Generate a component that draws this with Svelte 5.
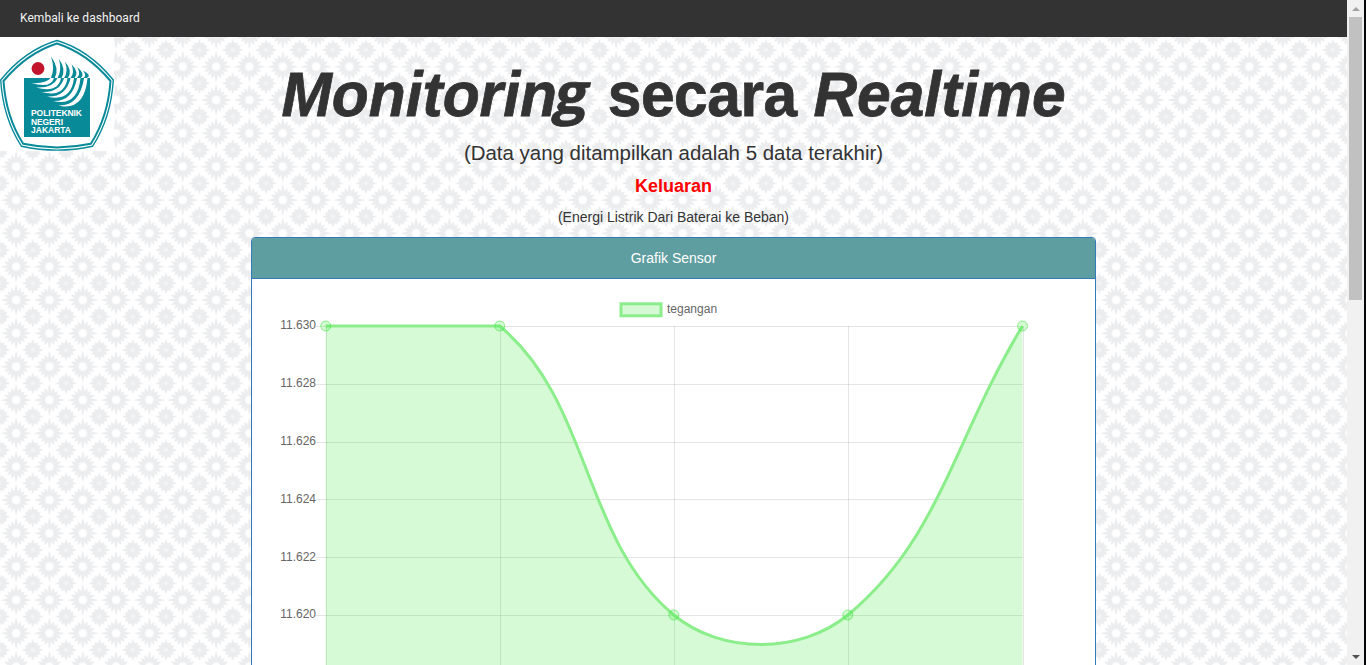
<script>
  const xs = [325.7, 499.7, 673.8, 847.8, 1022.5];
  const top = 326;
  const step = 57.8;
  const ticks = ['11.630', '11.628', '11.626', '11.624', '11.622', '11.620'];
  const values = [11.63, 11.63, 11.62, 11.62, 11.63];
  const ox = 252;
  const oy = 279;
  const pts = values.map((v, i) => ({ x: xs[i] - ox, y: top - oy + ((11.63 - v) / 0.002) * step }));
  const grid = xs.map((x) => Math.round(x) + 0.5 - ox);

  function spline(points) {
    const minY = top - oy;
    const ctrl = points.map((p, i) => {
      const a = points[Math.max(0, i - 1)];
      const b = points[Math.min(points.length - 1, i + 1)];
      const d1 = Math.hypot(p.x - a.x, p.y - a.y);
      const d2 = Math.hypot(b.x - p.x, b.y - p.y);
      const f1 = (0.4 * d1) / (d1 + d2);
      const f2 = (0.4 * d2) / (d1 + d2);
      return {
        px: p.x - f1 * (b.x - a.x), py: Math.max(minY, p.y - f1 * (b.y - a.y)),
        nx: p.x + f2 * (b.x - a.x), ny: Math.max(minY, p.y + f2 * (b.y - a.y))
      };
    });
    let d = `M${points[0].x} ${points[0].y}`;
    for (let i = 1; i < points.length; i++) {
      const c = ctrl[i - 1];
      const n = ctrl[i];
      d += `C${c.nx} ${c.ny} ${n.px} ${n.py} ${points[i].x} ${points[i].y}`;
    }
    return d;
  }
  const line = spline(pts);
  const area = `${line}V400H${pts[0].x}Z`;

  const petals = Array.from({ length: 16 }, (_, i) => {
    const len = i % 4 === 0 ? 15.6 : i % 4 === 2 ? 12 : 12.8;
    return { r: i * 22.5, d: `M0-3.500C-2-6-2.200-9 0-${len}C2.200-9 2-6 0-3.500Z` };
  });
  const rays = Array.from({ length: 12 }, (_, i) => {
    const len = i % 3 === 0 ? 11 : 9.2;
    return { r: i * 30, d: `M0 0L-1.800-6.300 0-${len} 1.800-6.300Z` };
  });

  const blades = [
    [51, 56.5, 54.8], [59, 59, 61.5], [65, 61.700, 68], [71.5, 64.3, 74.5], [77.3, 67.3, 80.700], [83, 70.5, 87]
  ].map(([x, y, b]) => `M${x} ${y}Q${b + 5} ${(y + 78) / 2 + 1} ${b} 78H${b - 4}Q${b + 0.5} ${(y + 78) / 2 + 2} ${x} ${y}Z`);
  const crescents = [
    [54, 31, 83], [61, 36, 87.5], [67.5, 41.5, 92], [74, 47, 96.5], [80.5, 53, 101], [87.5, 58, 105.5]
  ].map(([b, x, y]) => `M${b} 78Q${b - 3} ${y + 6} ${x} ${y}Q${b - 8} ${y + 1} ${b - 3.4} 78Z`);
</script>

<div class="screen">
  <svg class="wallpaper" width="1347" height="628" aria-hidden="true">
    <defs>
      <g id="large">
        {#each petals as p}<path transform="rotate({p.r})" d={p.d} />{/each}
      </g>
      <g id="small">
        {#each rays as p}<path transform="rotate({p.r})" d={p.d} />{/each}
        <circle r="1" fill="#f7f7f8" />
      </g>
      <pattern id="flowers" width="33.333" height="33.333" patternUnits="userSpaceOnUse" x="-.6" y="-3.7">
        <g fill="#ebecee">
          <use href="#large" x="16.7" y="0" /><use href="#large" x="16.7" y="33.333" />
          <use href="#small" x="0" y="16.67" /><use href="#small" x="33.333" y="16.67" />
        </g>
      </pattern>
    </defs>
    <rect width="1347" height="628" fill="url(#flowers)" />
  </svg>

  <div class="page">
    <nav><a href="#dashboard">Kembali ke dashboard</a></nav>
    <svg class="logo" width="114" height="114" viewBox="0 37 114 114">
      <path d="M0 37H114V151H0Z" fill="#fff" />
      <path d="M57 40.5Q89 50 113.3 80Q111 118 92.5 146.3Q57 154 21.5 146.3Q3 118 .7 80Q25 50 57 40.5Z" fill="#fff" stroke="#098a99" stroke-width="1.4" />
      <path d="M57 43.5Q87 53 110.5 81Q108 117 90.8 143.8Q57 151 23.2 143.8Q6 117 3.5 81Q27 53 57 43.5Z" fill="none" stroke="#098a99" stroke-width="2" />
      <path d="M24 78H90V137H24Z" fill="#098a99" />
      <circle cx="38" cy="68.5" r="6.4" fill="#c3142d" />
      {#each blades as d}<path {d} fill="#098a99" />{/each}
      {#each crescents as d}<path {d} fill="#fff" />{/each}
      <g class="logo-text" fill="#fff">
        <text x="31" y="116.300" textLength="51">POLITEKNIK</text>
        <text x="31" y="124.800" textLength="32">NEGERI</text>
        <text x="31" y="133.300" textLength="40">JAKARTA</text>
      </g>
    </svg>
    <header>
      <h1><i>Monitorin<span class="g">g</span></i> <span class="mid">secara</span> <i>Realtime</i></h1>
      <p class="lead">(Data yang ditampilkan adalah 5 data terakhir)</p>
      <h2>Keluaran</h2>
      <p class="note">(Energi Listrik Dari Baterai ke Beban)</p>
    </header>
    <section class="panel">
      <div class="heading">Grafik Sensor</div>
      <svg class="chart" width="843" height="386">
        <rect x="369" y="24.8" width="40" height="12" fill="#d5f9d5" stroke="#8bee8b" stroke-width="3" />
        <text x="415" y="34">tegangan</text>
        <g stroke="#000" stroke-opacity=".1">
          {#each grid as x}<path d="M{x} 47V386" />{/each}
          {#each ticks as _, i}<path d="M64 {Math.round(47 + i * step) + 0.5}H771" />{/each}
        </g>
        {#each ticks as label, i}
          <text x="64" y={50.3 + i * step} text-anchor="end">{label}</text>
        {/each}
        <path d={area} fill="#2ee52e" fill-opacity=".2" />
        <path d={line} fill="none" stroke="#8bee8b" stroke-width="3" />
        {#each pts as p}
          <circle cx={p.x} cy={p.y} r="5" fill="#2ee52e" fill-opacity=".2" stroke="#2ee52e" stroke-opacity=".5" />
        {/each}
      </svg>
    </section>
  </div>

  <div class="scrollbar">
    <span class="up"></span>
    <span class="thumb"></span>
    <span class="down"></span>
  </div>
  <div class="edge"></div>
</div>

<style>
  :global(body) { overflow: hidden; background: #fff; }
  .screen {
    position: relative; display: flex; width: 1366px; height: 665px; overflow: hidden;
    font-family: "Liberation Sans", Arial, sans-serif; color: #333;
  }
  .wallpaper { position: absolute; left: 0; top: 37px; }
  .page { position: relative; width: 1347px; height: 665px; overflow: hidden; }
  nav { height: 37px; background: #333; display: flex; align-items: center; padding: 0 20px 1px; box-sizing: border-box; }
  nav a { color: #f2f2f2; text-decoration: none; font: 12px Roboto, sans-serif; letter-spacing: .06px; }
  .logo { position: absolute; left: 0; top: 37px; }
  .logo-text { font: bold 8.5px "Liberation Sans", Arial, sans-serif; }
  header { height: 200px; text-align: center; white-space: nowrap; }
  h1, h2, p { margin: 0; }
  h1 { font-size: 63px; line-height: 72px; padding-top: 21px; font-weight: 700; transform: scaleX(.96); -webkit-text-stroke: .8px #333; }
  .mid { letter-spacing: -.5px; }
  .g { display: inline-block; font-family: "Open Sans", sans-serif; font-style: normal; font-size: 61px; line-height: 60px; margin-left: 1px; transform-origin: 50% 35%; transform: skewX(-11deg) scaleY(.91); }
  .lead { font-size: 20.45px; line-height: 24px; padding-top: 11px; }
  h2 { font-size: 18px; line-height: 20px; padding-top: 11px; color: #f00; }
  .note { font-size: 14px; line-height: 20px; padding-top: 11px; }
  .panel { width: 843px; margin: 0 0 0 251px; border: 1px solid #337ab7; border-radius: 4px 4px 0 0; background: #fff; }
  .heading { height: 40px; line-height: 40px; text-align: center; font-size: 14px; color: #fff; background: #5f9ea0; border-bottom: 1px solid #337ab7; border-radius: 3px 3px 0 0; }
  .chart { display: block; font: 12px "Liberation Sans", Arial, sans-serif; }
  .chart text { fill: #666; }
  .scrollbar { width: 17px; height: 665px; background: #f1f1f1; display: flex; flex-direction: column; align-items: center; }
  .up, .down { height: 17px; width: 17px; display: grid; place-items: center; }
  .up::after, .down::after { content: ""; border: 4px solid transparent; border-top-width: 0; border-bottom: 4px solid #a3a3a3; }
  .down::after { border-top: 4px solid #505050; border-bottom-width: 0; }
  .down { margin-top: auto; }
  .thumb { width: 13px; height: 283px; background: #c1c1c1; }
  .edge { width: 2px; background: #050608; }
</style>
